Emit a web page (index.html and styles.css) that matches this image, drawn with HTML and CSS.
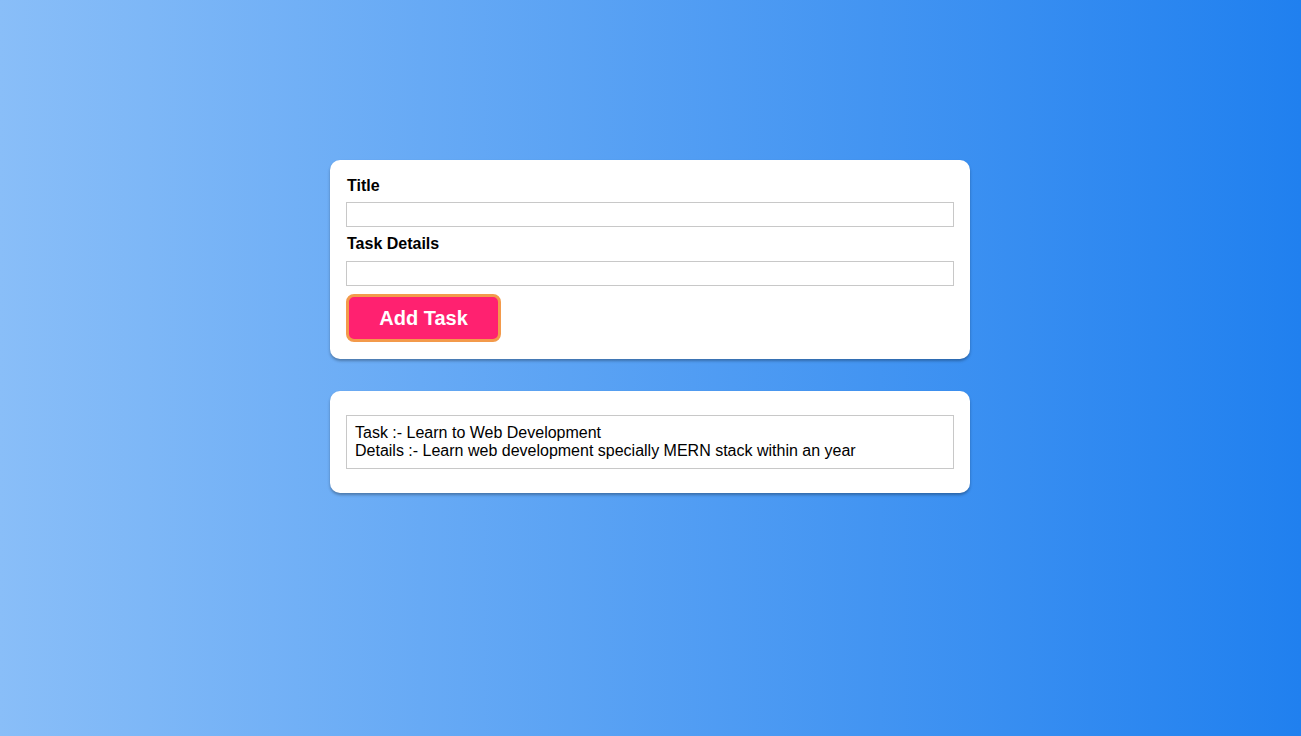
FILE: index.html
```html
<!DOCTYPE html>
<html lang="en">
<head>
<meta charset="utf-8">
<title>Task Manager</title>
<link rel="stylesheet" href="styles.css">
</head>
<body>
<main class="page">
  <form class="card form-card">
    <label class="label" for="title">Title</label>
    <input class="field" id="title" type="text">
    <label class="label" for="details">Task Details</label>
    <input class="field" id="details" type="text">
    <div class="actions">
      <button class="add-btn" type="button">Add Task</button>
    </div>
  </form>
  <section class="card list-card">
    <div class="task">
      <div>Task :- Learn to Web Development</div>
      <div>Details :- Learn web development specially MERN stack within an year</div>
    </div>
  </section>
</main>
</body>
</html>
```
FILE: styles.css
```css
* { box-sizing: border-box; }
html, body { height: 100%; }
body {
  margin: 0;
  font-family: "Liberation Sans", Arial, sans-serif;
  background: linear-gradient(to right, #89bef8, #2080ef);
  color: #000;
}
.page {
  width: 640px;
  margin-left: calc(50% - 320.5px);
  padding-top: 160px;
  display: flex;
  flex-direction: column;
  gap: 32px;
}
.card {
  background: #fff;
  border-radius: 10px;
  box-shadow: 0 2px 3px rgba(0, 0, 0, 0.3);
  padding: 16px;
}
.form-card {
  display: flex;
  flex-direction: column;
  gap: 8px;
  padding-bottom: 17px;
}
.label {
  font-size: 16px;
  font-weight: bold;
  line-height: 18px;
  padding-left: 1px;
}
.label:first-child {
  margin-top: 1px;
  margin-bottom: -1px;
}
.field {
  height: 25px;
  width: 100%;
  border: 1px solid #c8c8c8;
  margin: 0;
  padding: 2px 4px;
  font: 16px "Liberation Sans", Arial, sans-serif;
}
.actions { display: flex; }
.add-btn {
  width: 155px;
  height: 48px;
  background: #ff2170;
  border: 3px solid #f39a4b;
  border-radius: 8px;
  color: #fff;
  font: bold 20px "Liberation Sans", Arial, sans-serif;
  cursor: pointer;
}
.list-card {
  padding: 24px 16px;
}
.task {
  border: 1px solid #c8c8c8;
  padding: 8px 8px;
  font-size: 16px;
  line-height: 18px;
}
```
